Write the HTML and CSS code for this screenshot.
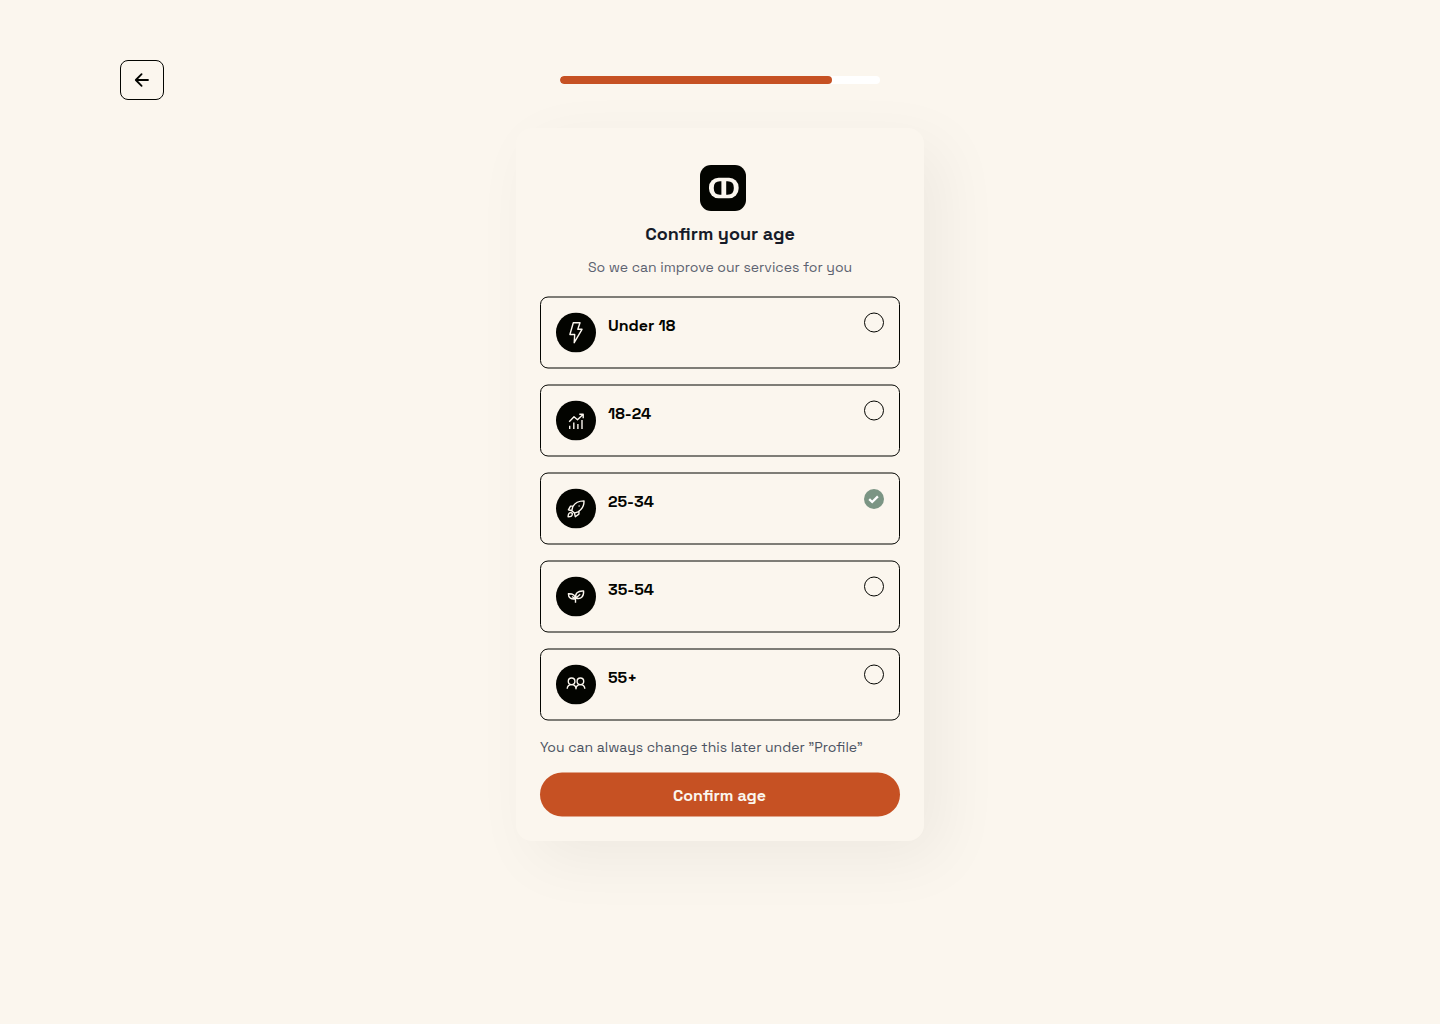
FILE: index.html
```html
<!DOCTYPE html>
<html lang="en">
<head>
<meta charset="utf-8">
<title>Confirm your age</title>
<link rel="stylesheet" href="styles.css">
</head>
<body>
<header class="topbar">
  <button class="back" aria-label="Back">
    <svg width="24" height="24" viewBox="0 0 24 24" fill="none" stroke="#030400" stroke-width="1.8" stroke-linecap="round" stroke-linejoin="round"><path d="M18 12H6M11.6 6.2L5.8 12L11.6 17.8"/></svg>
  </button>
  <div class="progress"><div class="progress-fill" style="width:85%"></div></div>
</header>
<main class="card">
  <svg class="logo" width="46" height="46" viewBox="0 0 46 46"><rect width="46" height="46" rx="11" fill="#030400"/><rect x="9" y="12.8" width="29.6" height="20.4" rx="9.5" fill="#fbf6ee"/><path d="M21.4 16.2V29.8H20Q13.8 29.8 13.8 23.6V22.4Q13.8 16.2 20 16.2ZM26.2 16.2V29.8H27.6Q33.8 29.8 33.8 23.6V22.4Q33.8 16.2 27.6 16.2Z" fill="#030400"/></svg>
  <h1 class="title">Confirm your age</h1>
  <p class="subtitle">So we can improve our services for you</p>
  <div class="options">
    <div class="option">
      <svg class="icon" viewBox="0 0 40 40"><circle cx="20" cy="20" r="20"/><path d="M17.3 10.3H24L21.8 16.8H26L18.2 30.2L18.7 22H13.9Z"/></svg>
      <span class="label">Under 18</span><span class="radio"></span>
    </div>
    <div class="option">
      <svg class="icon" viewBox="0 0 40 40"><circle cx="20" cy="20" r="20"/><path d="M13.7 28.4V25.2M17.8 28.4V22M21.9 28.4V23.6M26 28.4V19.5M13.2 21.2L18 16.3L21.5 19.3L26.7 14.2M23.3 13.8H27.2V17.7"/></svg>
      <span class="label">18-24</span><span class="radio"></span>
    </div>
    <div class="option">
      <svg class="icon" viewBox="0 0 40 40"><circle cx="20" cy="20" r="20"/><path d="M28 12.4C22.5 12.4 18.8 14.6 16.8 18.2L15.8 22.2L18.4 24.6L22 23.4C26 20.9 28.2 17.2 28 12.4ZM17.5 17.4L14.5 17.6L12.4 21.3L15.8 22.2M23 22.6L22.9 25.6L19.3 28.2L18.4 24.6M15.3 24.2C12.9 23.9 12.2 25.4 12.1 28.2C15 28.2 16.5 27.5 16.3 25.1ZM22.6 17.5h1"/></svg>
      <span class="label">25-34</span>
      <svg class="check" viewBox="0 0 20 20"><circle cx="10" cy="10" r="10" fill="#7b9584"/><path d="M5.2 10.1L8.2 13L13.9 7.4" fill="none" stroke="#fff" stroke-width="2.3"/></svg>
    </div>
    <div class="option">
      <svg class="icon" viewBox="0 0 40 40"><circle cx="20" cy="20" r="20"/><path d="M19.5 26.3V21.8M19.5 22.3C15.4 23.2 12.3 21.4 12.4 17.2C16.7 17.1 19.4 18.8 19.5 22.3ZM20 21.5C18.7 17 21.6 14.1 27.6 14.5C28 20.3 24.8 23.2 20 21.5ZM20 21.5L24.2 17.8M19.5 22.3L16 20"/></svg>
      <span class="label">35-54</span><span class="radio"></span>
    </div>
    <div class="option">
      <svg class="icon" viewBox="0 0 40 40"><circle cx="20" cy="20" r="20"/><circle cx="15.6" cy="16.8" r="3.3"/><circle cx="24.4" cy="16.8" r="3.3"/><path d="M11.2 24.3C11.3 21.8 13 20.1 15.6 20.1S19.9 21.8 20 24.3C20.1 21.8 21.8 20.1 24.4 20.1S28.7 21.8 28.8 24.3"/></svg>
      <span class="label">55+</span><span class="radio"></span>
    </div>
  </div>
  <p class="note">You can always change this later under ”Profile”</p>
  <button class="confirm">Confirm age</button>
</main>
</body>
</html>
```
FILE: styles.css
```css
* { box-sizing: border-box; }
body {
  margin: 0;
  min-height: 1024px;
  background: #fbf6ee;
  color: #030400;
  font-family: "Space Grotesk", Inter, "Liberation Sans", sans-serif;
}
.topbar {
  display: grid;
  grid-template-columns: 1fr 320px 1fr;
  align-items: center;
  height: 128px;
  padding: 32px 120px 0;
}
.back {
  display: flex;
  align-items: center;
  justify-content: center;
  width: 44px;
  height: 40px;
  padding: 0;
  border: 1px solid #030400;
  border-radius: 8px;
  background: none;
}
.progress { height: 8px; border-radius: 4px; background: #fff; overflow: hidden; }
.progress-fill { height: 8px; border-radius: 4px; background: #c65123; }
.card {
  display: flex;
  flex-direction: column;
  width: 408px;
  height: 712.5px;
  margin: 0 auto;
  padding: 37px 24px 24px;
  border-radius: 16px;
  background: #fbf6ee;
  box-shadow: 18px 18px 64px rgba(3, 4, 0, .055);
}
.logo { align-self: center; margin-left: 6px; flex: none; }
.title {
  margin: 9px 0 0;
  font-size: 18px;
  line-height: 28px;
  font-weight: 600;
  color: #161b28;
  text-align: center;
}
.subtitle, .note {
  margin: 9px 0 0;
  font-size: 14px;
  line-height: 20px;
  color: #5c6270;
  text-align: center;
  white-space: nowrap;
}
.subtitle { transform: translateY(-.5px); }
.options { display: flex; flex-direction: column; gap: 16px; margin-top: 19px; }
.option {
  position: relative;
  display: flex;
  align-items: flex-start;
  height: 72px;
  padding: 16px;
}
.option::before {
  content: "";
  position: absolute;
  inset: 0;
  border: 1px solid #030400;
  border-radius: 8px;
  transform: translateY(.5px);
}
.icon {
  width: 40px;
  height: 40px;
  flex: none;
  fill: none;
  stroke: #fbf6ee;
  stroke-width: 1.4;
  stroke-linejoin: round;
  transform: translateY(.5px);
}
.icon circle:first-child { fill: #030400; stroke: none; }
.label {
  margin: 1px 0 0 12px;
  font-size: 16px;
  line-height: 24px;
  font-weight: 600;
  white-space: nowrap;
  transform: translateY(.5px);
}
.radio, .check {
  width: 20px;
  height: 20px;
  margin-left: auto;
  flex: none;
  transform: translateY(.5px);
}
.check { transform: translateY(1px); }
.radio { border: 1px solid #030400; border-radius: 50%; }
.note { margin-top: 17px; text-align: left; color: #4b5362; transform: translateY(-.5px); }
.confirm {
  height: 44px;
  margin-top: 15px;
  padding: 1px 5px 0 4px;
  border: 0;
  border-radius: 22px;
  background: #c65123;
  color: #fbf6ee;
  font: 600 16px/24px "Space Grotesk", Inter, "Liberation Sans", sans-serif;
  transform: translateY(.5px);
  flex: none;
}
```
